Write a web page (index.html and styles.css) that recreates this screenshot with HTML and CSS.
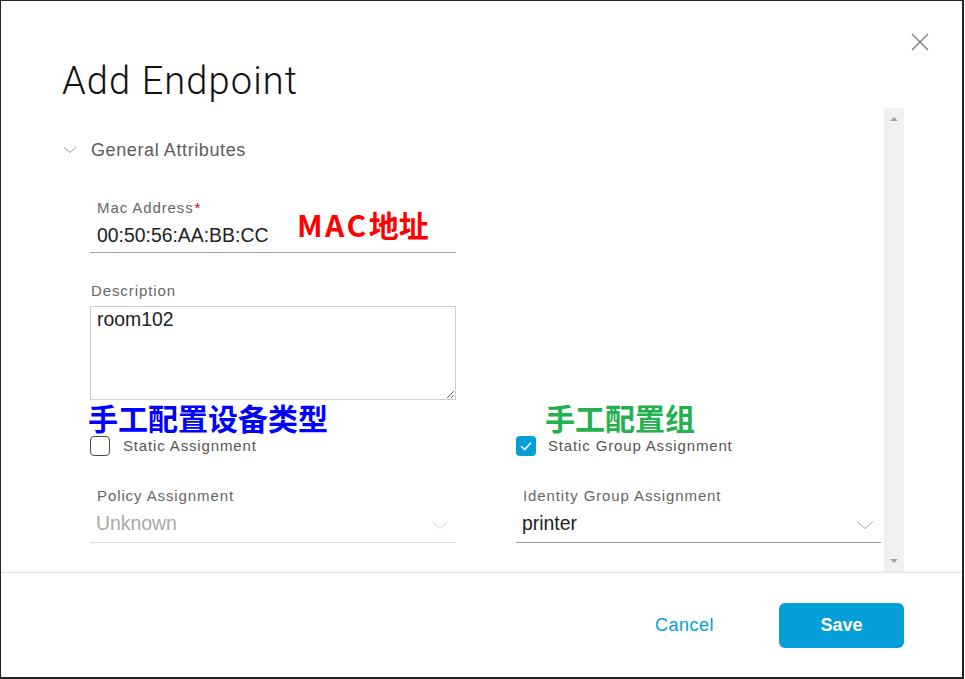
FILE: index.html
```html
<!DOCTYPE html>
<html lang="en">
<head>
<meta charset="utf-8">
<title>Add Endpoint</title>
<link rel="stylesheet" href="styles.css">
</head>
<body>
<div class="modal">
  <header class="modal-header">
    <h1 class="title">Add Endpoint</h1>
    <button class="close" aria-label="Close">
      <svg width="18" height="18" viewBox="0 0 18 18"><path d="M1 1 L17 17 M17 1 L1 17" stroke="#7a7a7a" stroke-width="1.4" fill="none"/></svg>
    </button>
  </header>
  <div class="modal-body">
    <div class="scroll-content">
      <div class="section-head">
        <svg class="chev-small" width="14" height="8" viewBox="0 0 14 8"><path d="M1 1.5 L7 6.5 L13 1.5" stroke="#9a9a9a" stroke-width="1" fill="none"/></svg>
        <span class="section-title">General Attributes</span>
      </div>
      <div class="fields">
        <div class="field field-mac">
          <div class="label">Mac Address<span class="req">*</span></div>
          <div class="value input-line">00:50:56:AA:BB:CC</div>
          <div class="note note-red"><span class="latin">MAC</span>地址</div>
        </div>
        <div class="field field-desc">
          <div class="label label-desc">Description</div>
          <textarea class="textarea" readonly>room102</textarea>
        </div>
        <div class="row assign-row">
          <div class="cell">
            <div class="note note-blue">手工配置设备类型</div>
            <label class="check">
              <span class="box"></span>
              <span class="check-text">Static Assignment</span>
            </label>
          </div>
          <div class="cell">
            <div class="note note-green">手工配置组</div>
            <label class="check">
              <span class="box box-on">
                <svg width="20" height="20" viewBox="0 0 20 20"><path d="M5.2 10.2 L8.6 13.6 L15 6.8" stroke="#fff" stroke-width="1.6" fill="none"/></svg>
              </span>
              <span class="check-text">Static Group Assignment</span>
            </label>
          </div>
        </div>
        <div class="row select-row">
          <div class="cell">
            <div class="label">Policy Assignment</div>
            <div class="select select-disabled">
              <span class="select-value">Unknown</span>
              <svg width="18" height="10" viewBox="0 0 18 10"><path d="M1 1.5 L9 8.5 L17 1.5" stroke="#cfcfcf" stroke-width="1" fill="none"/></svg>
            </div>
          </div>
          <div class="cell">
            <div class="label">Identity Group Assignment</div>
            <div class="select">
              <span class="select-value">printer</span>
              <svg width="18" height="10" viewBox="0 0 18 10"><path d="M1 1.5 L9 8.5 L17 1.5" stroke="#a5a5a5" stroke-width="1" fill="none"/></svg>
            </div>
          </div>
        </div>
      </div>
    </div>
    <div class="scrollbar">
      <span class="arrow arrow-up"></span>
      <span class="arrow arrow-down"></span>
    </div>
  </div>
  <footer class="modal-footer">
    <button class="btn-cancel">Cancel</button>
    <button class="btn-save">Save</button>
  </footer>
</div>
</body>
</html>
```
FILE: styles.css
```css
html, body {
  margin: 0;
  padding: 0;
  background: #fff;
}
body {
  font-family: "Liberation Sans", Arial, sans-serif;
  color: #222;
}
.modal {
  width: 964px;
  height: 679px;
  box-sizing: border-box;
  border-left: 1px solid #262626;
  border-top: 1px solid #262626;
  border-right: 2px solid #262626;
  border-bottom: 2px solid #262626;
  display: flex;
  flex-direction: column;
  position: relative;
  background: #fff;
}
.modal-header {
  height: 107px;
  box-sizing: border-box;
  padding: 0 0 0 61px;
  position: relative;
}
.title {
  margin: 0;
  padding-top: 58px;
  font-family: Roboto, "Liberation Sans", sans-serif;
  font-weight: 300;
  font-size: 38px;
  line-height: 44px;
  color: #111;
  letter-spacing: 1.1px;
}
.close {
  position: absolute;
  top: 32px;
  right: 33px;
  width: 18px;
  height: 18px;
  padding: 0;
  border: 0;
  background: none;
  display: block;
}
.close svg { display: block; }
.modal-body {
  height: 464px;
  display: flex;
  padding: 0 58px 0 61px;
}
.scroll-content {
  flex: 1;
  overflow: hidden;
}
.scrollbar {
  width: 20px;
  background: #f1f1f1;
  display: flex;
  flex-direction: column;
  justify-content: space-between;
  align-items: center;
  padding: 9px 0 9px;
  box-sizing: border-box;
}
.arrow {
  width: 0;
  height: 0;
  border-left: 4.5px solid transparent;
  border-right: 4.5px solid transparent;
}
.arrow-up { border-bottom: 4px solid #a3a3a3; }
.arrow-down { border-top: 4px solid #a3a3a3; }
.section-head {
  margin-top: 30px;
  height: 24px;
  display: flex;
  align-items: center;
}
.chev-small {
  margin-left: 1px;
  margin-right: 14px;
  display: block;
}
.section-title {
  font-size: 18px;
  line-height: 24px;
  color: #5c5c5c;
  letter-spacing: 0.6px;
}
.fields {
  padding-left: 28px;
}
.field {
  width: 366px;
  position: relative;
}
.field-mac { margin-top: 37px; }
.field-desc { margin-top: 29px; }
.label {
  font-size: 15px;
  line-height: 18px;
  color: #666;
  letter-spacing: 0.9px;
  padding-left: 7px;
}
.label-desc { padding-left: 1px; }
.req {
  color: #d0021b;
  margin-left: 1px;
}
.value {
  font-size: 19.4px;
  line-height: 22px;
  color: #222;
}
.input-line {
  margin-top: 7px;
  padding: 0 0 6px 7px;
  border-bottom: 1px solid #a6a6a6;
}
.textarea {
  display: block;
  margin-top: 6px;
  width: 366px;
  height: 94px;
  box-sizing: border-box;
  border: 1px solid #cfcfcf;
  border-radius: 0;
  padding: 1px 6px;
  font-family: "Liberation Sans", Arial, sans-serif;
  font-size: 19.4px;
  line-height: 22px;
  color: #222;
  resize: both;
  outline: none;
}
.note {
  font-family: "Noto Sans CJK SC", "Noto Sans", sans-serif;
  font-weight: 700;
  font-size: 30px;
  line-height: 34px;
  letter-spacing: 0;
}
.note-red {
  position: absolute;
  left: 207px;
  top: 8px;
  color: #ff0000;
}
.latin { letter-spacing: 2.5px; }
.note-blue {
  color: #0000ff;
  margin-left: -2px;
  margin-bottom: 2px;
}
.note-green {
  color: #22b14c;
  margin-left: 29px;
  margin-bottom: 2px;
}
.row {
  display: grid;
  grid-template-columns: 366px 365px;
  column-gap: 60px;
}
.check {
  display: flex;
  align-items: center;
  height: 20px;
}
.box {
  width: 20px;
  height: 20px;
  box-sizing: border-box;
  border: 1px solid #4a4a4a;
  border-radius: 4px;
  margin-right: 13px;
  flex: none;
}
.box-on {
  border: 0;
  background: #049fd9;
  margin-right: 12px;
}
.box-on svg { display: block; }
.check-text {
  font-size: 15px;
  line-height: 20px;
  color: #555;
  letter-spacing: 0.85px;
}
.select-row { margin-top: 31px; }
.select {
  margin-top: 7px;
  padding: 0 7px 8px 6px;
  border-bottom: 1px solid #9a9a9a;
  display: flex;
  align-items: center;
  justify-content: space-between;
  height: 22px;
}
.select svg { display: block; margin-top: 3px; }
.select-value {
  font-size: 19.4px;
  line-height: 22px;
  color: #222;
}
.select-disabled { border-bottom-color: #dcdcdc; }
.select-disabled .select-value { color: #a8a8a8; }
.modal-footer {
  flex: 1;
  border-top: 1px solid #e6e6e6;
  box-shadow: 0 -1px 2px rgba(0,0,0,0.04);
  display: flex;
  align-items: center;
  justify-content: flex-end;
  padding-right: 58px;
}
.btn-cancel {
  border: 0;
  background: none;
  padding: 0;
  font-family: "Liberation Sans", Arial, sans-serif;
  font-size: 18px;
  color: #049fd9;
  letter-spacing: 0.5px;
  margin-right: 65px;
}
.btn-save {
  width: 125px;
  height: 45px;
  border: 0;
  border-radius: 6px;
  background: #049fd9;
  color: #fff;
  font-family: "Liberation Sans", Arial, sans-serif;
  font-weight: 700;
  font-size: 18px;
  padding: 0;
}
```
